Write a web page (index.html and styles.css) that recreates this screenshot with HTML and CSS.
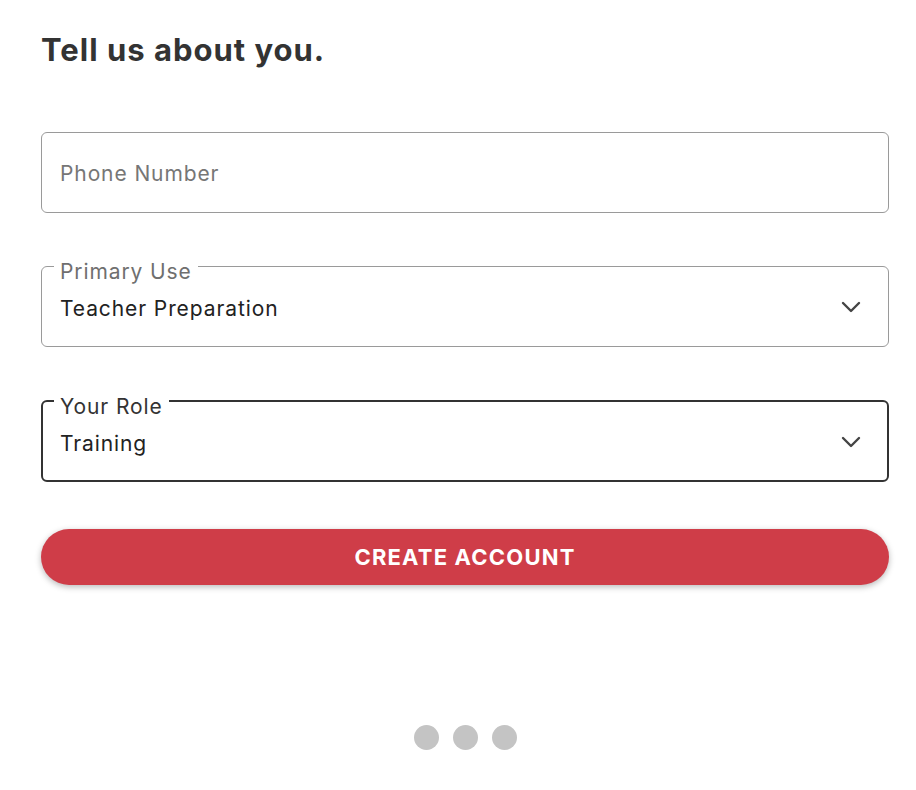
FILE: index.html
```html
<!DOCTYPE html>
<html>
<head>
<meta charset="utf-8">
<link rel="stylesheet" href="styles.css">
</head>
<body>
<main class="page">
  <h1 class="title">Tell us about you.</h1>
  <form class="form">
    <div class="field field-plain">
      <span class="placeholder">Phone Number</span>
    </div>
    <fieldset class="field field-outlined">
      <legend class="label">Primary Use</legend>
      <div class="value-row">
        <span class="value">Teacher Preparation</span>
        <svg class="chevron" width="20" height="12" viewBox="0 0 20 12"><path d="M2 2 L10 10 L18 2" fill="none" stroke="#444" stroke-width="2.4" stroke-linecap="round" stroke-linejoin="round"/></svg>
      </div>
    </fieldset>
    <fieldset class="field field-outlined focused">
      <legend class="label">Your Role</legend>
      <div class="value-row">
        <span class="value">Training</span>
        <svg class="chevron" width="20" height="12" viewBox="0 0 20 12"><path d="M2 2 L10 10 L18 2" fill="none" stroke="#444" stroke-width="2.4" stroke-linecap="round" stroke-linejoin="round"/></svg>
      </div>
    </fieldset>
    <button type="button" class="btn">CREATE ACCOUNT</button>
  </form>
  <div class="dots">
    <span class="dot"></span><span class="dot"></span><span class="dot"></span>
  </div>
</main>
</body>
</html>
```

FILE: styles.css
```css
html, body {
  margin: 0;
  padding: 0;
  background: #ffffff;
}
body {
  font-family: "Inter", "Open Sans", sans-serif;
  color: #333;
}
.page {
  width: 848px;
  padding: 30px 0 0 41px;
}
.title {
  margin: 0;
  font-size: 31px;
  line-height: 40px;
  font-weight: 700;
  letter-spacing: 1px;
  color: #333;
}
.form {
  margin-top: 62px;
  display: flex;
  flex-direction: column;
}
.field {
  box-sizing: border-box;
  margin: 0;
  border: 1px solid #9a9a9a;
  border-radius: 6px;
}
.field-plain {
  height: 81px;
  padding: 2px 18px 0;
  display: flex;
  align-items: center;
}
.placeholder {
  font-size: 21px;
  letter-spacing: 0.9px;
  color: #767676;
}
.field-outlined {
  margin-top: 35px;
  padding: 0 27px 25px 18px;
  min-width: 0;
}
.field-outlined.focused {
  margin-top: 36px;
  border: 2px solid #333;
  padding: 0 26px 24px 17px;
}
.label {
  padding: 12px 6px 0;
  margin-left: -6px;
  font-size: 21px;
  line-height: 24px;
  letter-spacing: 0.9px;
  color: #6f6f6f;
}
.focused .label {
  color: #333;
}
.value-row {
  margin-top: 13px;
  display: flex;
  align-items: center;
  justify-content: space-between;
  height: 24px;
}
.value {
  font-size: 21px;
  line-height: 24px;
  letter-spacing: 0.9px;
  color: #222;
}
.chevron {
  display: block;
  margin-top: -4px;
}
.btn {
  margin-top: 47px;
  height: 56px;
  border: none;
  border-radius: 28px;
  background: #cf3d48;
  color: #fff;
  font-family: "Inter", "Open Sans", sans-serif;
  font-weight: 700;
  font-size: 22px;
  letter-spacing: 1.2px;
  box-shadow: 0 2px 6px rgba(0,0,0,0.28);
  cursor: pointer;
}
.dots {
  margin-top: 140px;
  display: flex;
  justify-content: center;
  gap: 14px;
}
.dot {
  width: 25px;
  height: 25px;
  border-radius: 50%;
  background: #c4c4c4;
}
```
